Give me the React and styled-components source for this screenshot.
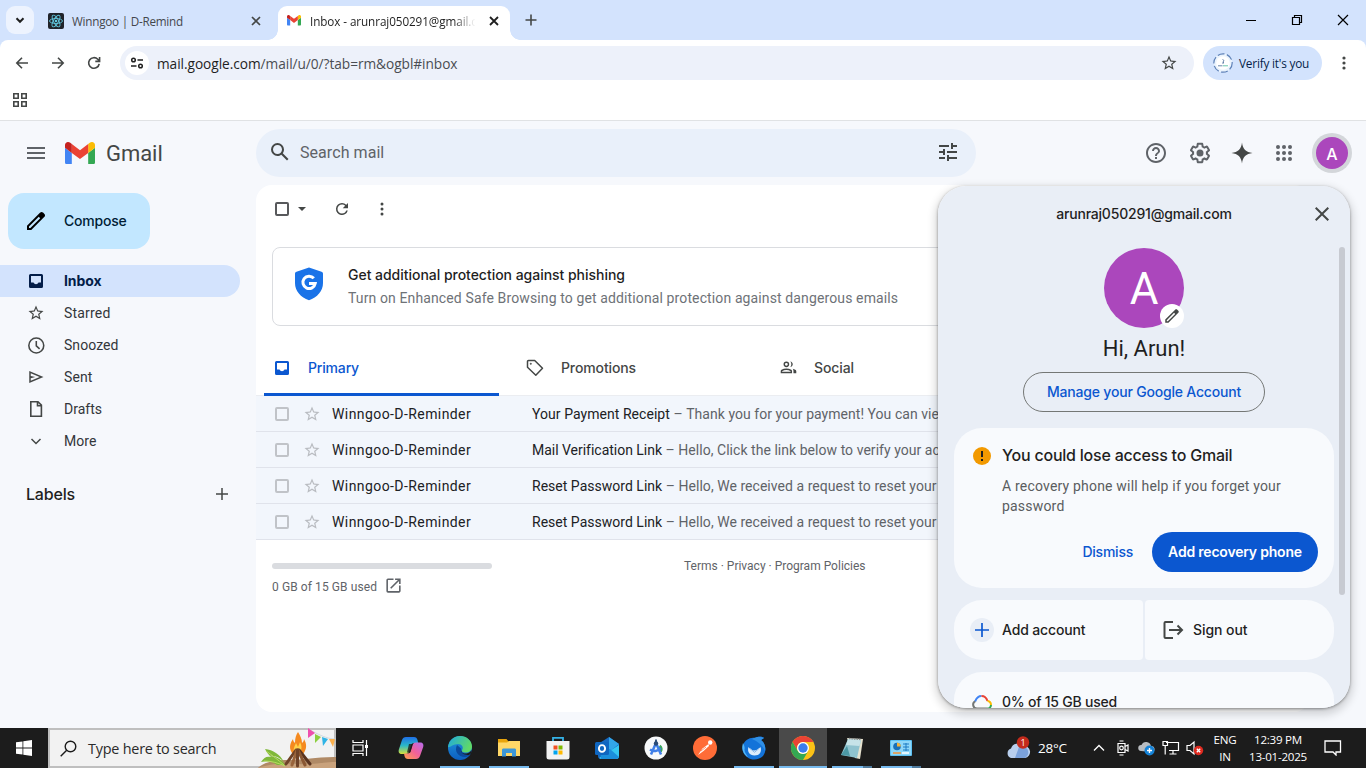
import React from 'react';
import styled, { createGlobalStyle, css } from 'styled-components';

const GlobalStyle = createGlobalStyle`
  * { box-sizing: border-box; }
  body { margin: 0; overflow: hidden; background: #f6f8fc; }
`;

const sans = '"Roboto", "Liberation Sans", sans-serif';
const medium = '"Inter", "Liberation Sans", sans-serif';
const system = '"Open Sans", "Noto Sans", sans-serif';

const Screen = styled.div`
  width: 1366px;
  height: 768px;
  display: flex;
  flex-direction: column;
  position: relative;
  overflow: hidden;
  font-family: ${sans};
`;

/* Text in the web page's own type: "strong" switches to the medium cut. */
const Text = styled.span`
  font-family: ${(p) => (p.$strong ? medium : sans)};
  font-weight: ${(p) => p.$weight || (p.$strong ? 500 : 400)};
  font-size: ${(p) => p.$size || 14}px;
  letter-spacing: ${(p) => p.$track || 0}px;
  color: ${(p) => p.$color || '#1f1f1f'};
  line-height: 20px;
  white-space: ${(p) => (p.$wrap ? 'pre-line' : 'nowrap')};
`;

const SystemText = styled.span`
  font-family: ${system};
  font-size: ${(p) => p.$size || 12}px;
  letter-spacing: ${(p) => p.$track || 0}px;
  color: ${(p) => p.$color || '#1f1f1f'};
  line-height: 18px;
  white-space: nowrap;
`;

const Svg = styled.svg`
  display: block;
  flex: none;
`;

function Icon({ d, size = 20, color = '#444746', box = 24, children }) {
  return (
    <Svg width={size} height={size} viewBox={`0 0 ${box} ${box}`} fill={color} fillRule="evenodd">
      {d && <path d={d} />}
      {children}
    </Svg>
  );
}

function LineIcon({ d, size = 16, color = '#444746', box = 16, width = 1.6 }) {
  return (
    <Svg width={size} height={size} viewBox={`0 0 ${box} ${box}`} fill="none" stroke={color} strokeWidth={width}>
      <path d={d} />
    </Svg>
  );
}

const paths = {
  search: 'M20.49 19l-5.73-5.73C15.53 12.2 16 10.91 16 9.5A6.5 6.5 0 1 0 9.5 16c1.41 0 2.7-.47 3.77-1.24L19 20.49 20.49 19zM5 9.5C5 7.01 7.01 5 9.5 5S14 7.01 14 9.5 11.99 14 9.5 14 5 11.99 5 9.5z',
  tune: 'M3 17v2h6v-2H3zM3 5v2h10V5H3zm10 16v-2h8v-2h-8v-2h-2v6h2zM7 9v2H3v2h4v2h2V9H7zm14 4v-2H11v2h10zm-6-4h2V7h4V5h-4V3h-2v6z',
  help: 'M11 18h2v-2h-2v2zm1-16C6.48 2 2 6.48 2 12s4.48 10 10 10 10-4.48 10-10S17.52 2 12 2zm0 18c-4.41 0-8-3.59-8-8s3.59-8 8-8 8 3.59 8 8-3.59 8-8 8zm0-14c-2.21 0-4 1.79-4 4h2c0-1.1.9-2 2-2s2 .9 2 2c0 2-3 1.75-3 5h2c0-2.25 3-2.5 3-5 0-2.21-1.79-4-4-4z',
  gear: 'M13.85 22.25h-3.7c-.74 0-1.36-.54-1.45-1.27l-.27-1.89c-.27-.14-.53-.29-.79-.46l-1.8.72c-.7.26-1.47-.03-1.81-.65L2.2 15.53c-.35-.66-.2-1.44.36-1.88l1.53-1.19c-.01-.15-.02-.3-.02-.46 0-.15.01-.31.02-.46l-1.52-1.19c-.59-.45-.74-1.26-.37-1.88l1.85-3.19c.34-.62 1.11-.9 1.79-.63l1.81.73c.26-.17.52-.32.78-.46l.27-1.91c.09-.7.71-1.25 1.44-1.25h3.7c.74 0 1.36.54 1.45 1.27l.27 1.89c.27.14.53.29.79.46l1.8-.72c.71-.26 1.48.03 1.82.65l1.84 3.18c.36.66.2 1.44-.36 1.88l-1.52 1.19c.01.15.02.3.02.46s-.01.31-.02.46l1.52 1.19c.56.45.72 1.23.37 1.86l-1.86 3.22c-.34.62-1.11.9-1.8.63l-1.8-.72c-.26.17-.52.32-.78.46l-.27 1.91c-.1.68-.72 1.22-1.46 1.22zm-3.23-2h2.76l.37-2.55.53-.22c.44-.18.88-.44 1.34-.78l.45-.34 2.38.96 1.38-2.4-2.03-1.58.07-.56c.03-.26.06-.51.06-.78s-.03-.53-.06-.78l-.07-.56 2.03-1.58-1.39-2.4-2.39.96-.45-.35c-.42-.32-.87-.58-1.33-.77l-.52-.22-.37-2.55h-2.76l-.37 2.55-.53.21c-.44.19-.88.44-1.34.79l-.45.33-2.38-.95-1.39 2.39 2.03 1.58-.07.56a7 7 0 0 0-.06.79c0 .26.02.53.06.78l.07.56-2.03 1.58 1.38 2.4 2.39-.96.45.35c.43.33.86.58 1.33.77l.53.22.38 2.55zM12 8.5a3.5 3.5 0 1 0 0 7 3.5 3.5 0 0 0 0-7z',
  spark: 'M12 1.5C12.7 8 16 11.3 22.5 12 16 12.7 12.7 16 12 22.5 11.3 16 8 12.7 1.5 12 8 11.3 11.3 8 12 1.5z',
  pencil: 'M5 19h1.425L16.2 9.225 14.775 7.8 5 17.575V19Zm-2 2v-4.25L16.2 3.575q.3-.275.663-.425T17.625 3q.4 0 .775.15t.65.45L20.425 5q.3.275.438.65T21 6.4q0 .4-.137.763t-.438.662L7.25 21H3Z',
  inbox: 'M2.5 1h11A1.5 1.5 0 0 1 15 2.5v11a1.5 1.5 0 0 1-1.5 1.5h-11A1.5 1.5 0 0 1 1 13.5v-11A1.5 1.5 0 0 1 2.5 1zM3 3v6.5h2.5c.6 1 1.4 1.700 2.500 1.700s1.900-.7 2.500-1.700H13V3z',
  star: 'M22 9.24l-7.19-.62L12 2 9.19 8.63 2 9.24l5.46 4.73L5.82 21 12 17.27 18.18 21l-1.63-7.03L22 9.24zM12 15.4l-3.76 2.27 1-4.28-3.32-2.88 4.38-.38L12 6.1l1.71 4.04 4.38.38-3.32 2.88 1 4.28L12 15.4z',
  send: 'M3 20V4l19 8-19 8zm2-3 11.85-5L5 7v3.5l6 1.5-6 1.5V17z',
  refresh: 'M17.65 6.35A7.958 7.958 0 0 0 12 4a8 8 0 1 0 7.73 10h-2.08A5.99 5.99 0 0 1 12 18a6 6 0 1 1 0-12c1.66 0 3.14.69 4.22 1.78L13 11h7V4l-2.35 2.35z',
  people: 'M9 11.500a4 4 0 1 0 0-8 4 4 0 0 0 0 8zm0-2a2 2 0 1 1 0-4 2 2 0 0 1 0 4zM1 20v-2.800c0-.8.4-1.500 1.100-1.900C4.100 14.100 6.500 13.500 9 13.500s4.900.6 6.900 1.800c.7.4 1.100 1.100 1.100 1.900V20H1zm2-2h12v-.8c-1.700-1.100-3.800-1.700-6-1.700s-4.300.6-6 1.700zM14.600 11.400c1.900-.3 3.400-1.900 3.400-3.900s-1.500-3.700-3.400-4c.9 1.100 1.400 2.500 1.400 4s-.5 2.800-1.400 3.900zM19 20h4v-2.800c0-1.600-2.300-2.800-5-3.400 .7.900 1 2 1 3.400z',
  open: 'M19 19H5V5h7V3H5a2 2 0 0 0-2 2v14a2 2 0 0 0 2 2h14c1.100 0 2-.9 2-2v-7h-2v7zM14 3v2h3.590l-9.830 9.830 1.410 1.410L19 6.410V10h2V3h-7z',
  close: 'M19 6.410L17.590 5 12 10.590 6.410 5 5 6.410 10.590 12 5 17.590 6.410 19 12 13.410 17.590 19 19 17.590 13.410 12z',
};

/* ---------- Browser chrome ---------- */

const TabStrip = styled.div`
  height: 40px;
  background: #d3e3fd;
  display: flex;
  align-items: flex-end;
  padding-left: 6px;
`;

const TabSearch = styled.div`
  width: 28px;
  height: 28px;
  border-radius: 9px;
  background: #edf3fe;
  display: flex;
  align-items: center;
  justify-content: center;
  margin-bottom: 6px;
`;

const Tab = styled.div`
  height: 34px;
  width: ${(p) => p.$width}px;
  display: flex;
  align-items: center;
  padding: 0 14px 5px 14px;
  gap: 8px;
  ${(p) =>
    p.$active &&
    css`
      background: #fff;
      padding: 0 8px 5px 9px;
      gap: 9px;
      border-radius: 9px 9px 0 0;
      position: relative;
      &::before, &::after {
        content: '';
        position: absolute;
        bottom: 0;
        width: 10px;
        height: 10px;
      }
      &::before { left: -10px; background: radial-gradient(circle at 0 0, transparent 9.5px, #fff 10px); }
      &::after { right: -10px; background: radial-gradient(circle at 100% 0, transparent 9.5px, #fff 10px); }
    `}
`;

const TabTitle = styled(SystemText)`
  flex: 1;
  ${(p) => p.$fade && 'mask-image: linear-gradient(90deg, #000 86%, transparent 99%);'}
`;

const NewTab = styled.div`
  width: 42px;
  height: 40px;
  display: flex;
  align-items: center;
  justify-content: center;
`;

const WindowButtons = styled.div`
  margin-left: auto;
  height: 40px;
  display: flex;
`;

const WindowButton = styled.div`
  width: 46px;
  display: flex;
  align-items: center;
  justify-content: center;
`;

const NavBar = styled.div`
  height: 45px;
  background: #fff;
  display: flex;
  align-items: center;
  padding: 1px 14px 0 14px;
  border-radius: 8px 8px 0 0;
`;

const NavBackdrop = styled.div`
  background: #d3e3fd;
`;

const NavButton = styled.div`
  width: 16px;
  margin-right: 20px;
`;

const AddressBar = styled.div`
  height: 34px;
  width: 1074px;
  margin-left: -2px;
  border-radius: 17px;
  background: #edf1fa;
  display: flex;
  align-items: center;
  padding: 0 16px 0 5px;
`;

const SiteInfo = styled.div`
  width: 24px;
  height: 24px;
  border-radius: 50%;
  background: #fff;
  display: flex;
  align-items: center;
  justify-content: center;
  margin-right: 8px;
`;

const Url = styled(SystemText)`
  flex: 1;
  padding-top: 1px;
  & > b { font-weight: 400; color: #1f1f1f; }
`;

const ProfileChip = styled.div`
  width: 119px;
  height: 34px;
  margin-left: 9px;
  border-radius: 17px;
  background: #d3e3fd;
  display: flex;
  align-items: center;
  gap: 6px;
  padding-left: 10px;
`;

const MenuSlot = styled.div`
  margin: 0 0 0 14px;
`;

const BookmarkBar = styled.div`
  height: 36px;
  background: #fff;
  border-bottom: 1px solid #e0e2e4;
  padding: 7px 12px;
`;

/* ---------- Mail page ---------- */

const Page = styled.div`
  flex: 1;
  min-height: 0;
  background: #f6f8fc;
  display: flex;
  flex-direction: column;
`;

const Header = styled.header`
  height: 64px;
  display: flex;
  align-items: center;
`;

const Brand = styled.div`
  width: 256px;
  display: flex;
  align-items: center;
  padding-left: 24px;
`;

const BrandName = styled(Text)`
  line-height: 28px;
  margin-left: 11px;
  padding-top: 1px;
`;

const Logo = styled.div`
  margin-left: 17px;
`;

const SearchBox = styled.div`
  width: 720px;
  height: 48px;
  border-radius: 24px;
  background: #e9f0fa;
  display: flex;
  align-items: center;
  padding: 0 16px 2px 12px;
`;

const SearchLabel = styled(Text)`
  flex: 1;
  margin-left: 8px;
  padding-top: 2px;
`;

const HeaderActions = styled.div`
  margin-left: auto;
  display: flex;
  align-items: center;
  padding-right: 14px;
`;

const HeaderButton = styled.div`
  width: ${(p) => p.$width}px;
  display: flex;
  justify-content: center;
`;

const Avatar = styled.div`
  width: ${(p) => p.$size}px;
  height: ${(p) => p.$size}px;
  border-radius: 50%;
  background: #ab47bc;
  display: flex;
  align-items: center;
  justify-content: center;
  padding-top: 1px;
`;

const AvatarRing = styled.div`
  padding: 4px;
  border-radius: 50%;
  background: #d3d6da;
  margin-left: 6px;
`;

const Body = styled.div`
  flex: 1;
  display: flex;
  min-height: 0;
  padding-bottom: 16px;
`;

const Sidebar = styled.nav`
  width: 256px;
  padding-top: 8px;
`;

const Compose = styled.div`
  width: 142px;
  height: 56px;
  margin: 0 0 16px 8px;
  border-radius: 16px;
  background: #c2e7ff;
  display: flex;
  align-items: center;
  padding-left: 16px;
  gap: 16px;
`;

const NavItem = styled.div`
  height: 32px;
  width: 240px;
  display: flex;
  align-items: center;
  border-radius: 0 16px 16px 0;
  background: ${(p) => (p.$active ? '#d3e3fd' : 'transparent')};
`;

const NavIcon = styled.div`
  width: 64px;
  padding-left: 26px;
  display: flex;
  & > svg { margin-left: ${(p) => p.$shift || 0}px; }
`;

const LabelsRow = styled.div`
  display: flex;
  align-items: center;
  justify-content: space-between;
  padding: 27px 26px 0 26px;
`;

const Main = styled.main`
  width: 1054px;
  border-radius: 16px;
  background: #fff;
  overflow: hidden;
`;

const Toolbar = styled.div`
  height: 48px;
  display: flex;
  align-items: center;
  padding-left: 19px;
`;

const Box = styled.div`
  width: 14px;
  height: 14px;
  flex: none;
  border: 2px solid ${(p) => (p.$faint ? '#c0c3c8' : '#58595c')};
  border-radius: 2px;
`;

const Caret = styled.div`
  margin: 0 27px 0 9px;
  border: 4px solid transparent;
  border-top-color: #444746;
  border-bottom: 0;
`;

const MoreSlot = styled.div`
  margin-left: 23px;
`;

const Notice = styled.section`
  margin: 14px 16px 0;
  height: 79px;
  border: 1px solid #dadce0;
  border-radius: 8px;
  display: flex;
  padding: 0 0 0 22px;
  align-items: center;
  gap: 25px;
`;

const ShieldSlot = styled.div`
  padding-bottom: 6px;
`;

const NoticeText = styled.div`
  display: flex;
  flex-direction: column;
  gap: 3px;
  padding-bottom: 1px;
`;

const CategoryTabs = styled.div`
  height: 70px;
  padding: 14px 0 0 8px;
  display: flex;
`;

const Category = styled.div`
  width: 235px;
  margin-right: 18px;
  display: flex;
  align-items: center;
  gap: 17px;
  padding: 2px 0 0 9px;
  border-bottom: 3px solid ${(p) => (p.$active ? '#0b57d0' : 'transparent')};
  border-radius: 3px 3px 0 0;
`;

const CategoryIcon = styled.div`
  width: 18px;
  display: flex;
  justify-content: center;
`;

const Row = styled.div`
  height: 36px;
  background: #f2f6fc;
  border-bottom: 1px solid #e0e3eb;
  display: flex;
  align-items: center;
  padding-left: 19px;
  box-shadow: ${(p) => (p.$first ? '0 -1px 0 #ebedf1' : 'none')};
`;

const StarSlot = styled.div`
  margin: 1px 11px 0 14px;
`;

const Sender = styled.div`
  width: 200px;
  display: flex;
`;

const Footer = styled.footer`
  display: flex;
  padding: 16px 16px 0;
`;

const Storage = styled.div`
  width: 412px;
  padding-top: 7px;
`;

const StorageBar = styled.div`
  width: 220px;
  height: 6px;
  border-radius: 3px;
  background: #dadce0;
`;

const StorageLine = styled.div`
  display: flex;
  align-items: center;
  gap: 7px;
  padding-top: 8px;
  & > svg { margin-top: -4px; }
`;

/* ---------- Account card ---------- */

const AccountCard = styled.aside`
  position: absolute;
  left: 938px;
  top: 186px;
  width: 412px;
  height: 522px;
  border-radius: 28px;
  background: #e9eef6;
  overflow: hidden;
  display: flex;
  flex-direction: column;
  align-items: center;
  z-index: 1;
  & > * { flex: none; }
`;

const AccountShadow = styled.div`
  position: absolute;
  left: 938px;
  top: 186px;
  width: 412px;
  height: 522px;
  border-radius: 28px;
  box-shadow: 0 4px 8px 3px rgba(0, 0, 0, 0.15), 0 1px 3px rgba(0, 0, 0, 0.4);
`;

const AccountTop = styled.div`
  height: 62px;
  width: 100%;
  display: grid;
  grid-template-columns: 56px 1fr 56px;
  align-items: center;
  justify-items: center;
  padding-bottom: 6px;
`;

const BigAvatar = styled.div`
  position: relative;
`;

const EditBadge = styled.div`
  position: absolute;
  right: 0;
  bottom: 0;
  width: 24px;
  height: 24px;
  border-radius: 50%;
  background: #fff;
  display: flex;
  align-items: center;
  justify-content: center;
`;

const Greeting = styled(Text)`
  line-height: 28px;
  margin: 7px 0 9px;
`;

const ManageButton = styled.div`
  width: 242px;
  height: 40px;
  margin-bottom: 16px;
  border: 1px solid #747775;
  border-radius: 20px;
  display: flex;
  align-items: center;
  justify-content: center;
`;

const Panel = styled.div`
  width: 380px;
  border-radius: 28px;
  background: #f8fafd;
`;

const AlertPanel = styled(Panel)`
  height: 160px;
  padding: 18px 16px 16px 18px;
  display: flex;
  gap: 10px;
  margin-bottom: 12px;
`;

const AlertBody = styled.div`
  flex: 1;
  display: flex;
  flex-direction: column;
  margin-top: -1px;
`;

const AlertCopy = styled(Text)`
  margin-top: 11px;
`;

const AlertActions = styled.div`
  margin-top: 16px;
  display: flex;
  justify-content: flex-end;
  align-items: center;
  gap: 19px;
`;

const PrimaryButton = styled.div`
  width: 166px;
  height: 40px;
  border-radius: 20px;
  background: #0b57d0;
  display: flex;
  align-items: center;
  justify-content: center;
`;

const SplitPanel = styled.div`
  width: 380px;
  height: 60px;
  display: grid;
  grid-template-columns: 1fr 1fr;
  gap: 2px;
  margin-bottom: 12px;
`;

const SplitItem = styled.div`
  background: #f8fafd;
  border-radius: ${(p) => (p.$side === 'left' ? '28px 4px 4px 28px' : '4px 28px 28px 4px')};
  display: flex;
  align-items: center;
  padding-left: 16px;
  gap: 8px;
`;

const PlusBubble = styled.div`
  width: 24px;
  height: 24px;
  border-radius: 50%;
  background: #e9eef6;
  display: flex;
  align-items: center;
  justify-content: center;
`;

const CloudPanel = styled(Panel)`
  height: 60px;
  display: flex;
  align-items: center;
  padding-left: 18px;
  gap: 10px;
`;

const ScrollThumb = styled.div`
  position: absolute;
  right: 5px;
  top: 61px;
  width: 6px;
  height: 348px;
  border-radius: 3px;
  background: #c7cad1;
`;

/* ---------- Taskbar ---------- */

const Taskbar = styled.div`
  height: 40px;
  background: #1c1c1c;
  display: flex;
`;

const StartButton = styled.div`
  width: 48px;
  display: flex;
  align-items: center;
  justify-content: center;
`;

const TaskSearch = styled.div`
  width: 288px;
  height: 40px;
  background: #f2f2f2;
  border: 2px solid #bfbfbf;
  display: flex;
  align-items: center;
  padding-left: 10px;
  position: relative;
`;

const TaskSearchText = styled(SystemText)`
  margin-left: 11px;
  padding-top: 1px;
`;

const Campfire = styled.div`
  position: absolute;
  right: -2px;
  bottom: -2px;
`;

const Apps = styled.div`
  width: 590px;
  display: grid;
  grid-template-columns: 51px repeat(11, 49px);
`;

const AppSlot = styled.div`
  display: flex;
  align-items: center;
  justify-content: center;
  position: relative;
  padding-right: ${(p) => (p.$current ? 0 : 2)}px;
  &::after {
    content: '';
    position: absolute;
    bottom: 0;
    left: 4px;
    right: 5px;
    height: 2px;
    background: ${(p) =>
      p.$stacked ? 'linear-gradient(90deg, #76b9ed 78%, #4f7a9c 78%)' : p.$running ? '#76b9ed' : 'transparent'};
  }
  ${(p) =>
    p.$current &&
    css`
      background: #4a4a4a;
      margin-right: 1px;
      &::after { left: 0; right: 0; }
    `}
`;

const Tray = styled.div`
  margin-left: auto;
  padding-right: 13px;
  display: grid;
  grid-template-columns: 28px 55px repeat(5, 24px) 36px 70px 40px;
  align-items: center;
  justify-items: center;
`;

const Temperature = styled(SystemText)`
  justify-self: start;
  margin-left: 6px;
`;

const TrayStack = styled.div`
  display: flex;
  flex-direction: column;
  align-items: center;
`;

const TrayText = styled(SystemText)`
  line-height: 17px;
  &:first-child { margin-top: -1px; }
`;

function GmailMark({ width }) {
  return (
    <Svg width={width} height={width * 0.75} viewBox="52 42 88 66">
      <path fill="#4285f4" d="M58 108h14V74L52 59v43c0 3.320 2.690 6 6 6" />
      <path fill="#34a853" d="M120 108h14c3.320 0 6-2.690 6-6V59l-20 15" />
      <path fill="#fbbc04" d="M120 48v26l20-15v-8c0-7.420-8.470-11.650-14.400-7.200" />
      <path fill="#ea4335" d="M72 74V48l24 18 24-18v26L96 92" />
      <path fill="#c5221f" d="M52 51v8l20 15V48l-5.600-4.200c-5.940-4.450-14.400-.22-14.400 7.200" />
    </Svg>
  );
}

function ReactMark() {
  return (
    <Svg width="16" height="16" viewBox="0 0 16 16">
      <rect width="16" height="16" rx="2" fill="#20232a" />
      <g fill="none" stroke="#61c7de" strokeWidth="0.9">
        <ellipse cx="8" cy="8" rx="6.500" ry="2.500" />
        <ellipse cx="8" cy="8" rx="6.500" ry="2.500" transform="rotate(60 8 8)" />
        <ellipse cx="8" cy="8" rx="6.500" ry="2.500" transform="rotate(120 8 8)" />
      </g>
      <circle cx="8" cy="8" r="1.300" fill="#61c7de" />
    </Svg>
  );
}

function Dots({ size = 16, color = '#444746', r = 1.7 }) {
  return (
    <Svg width={size} height={size} viewBox="0 0 16 16" fill={color}>
      {[3, 8, 13].map((y) => (
        <circle key={y} cx="8" cy={y} r={r} />
      ))}
    </Svg>
  );
}

function BrowserChrome() {
  return (
    <>
      <TabStrip>
        <TabSearch>
          <LineIcon d="M4.500 6.300l3.500 3.500 3.500-3.500" width={2} color="#1f1f1f" />
        </TabSearch>
        <Tab $width={244}>
          <ReactMark />
          <TabTitle $size={11.7} $track={-0.23} $color="#44474c">Winngoo | D-Remind</TabTitle>
          <LineIcon d="M4 4l8 8M12 4l-8 8" width={1.7} />
        </Tab>
        <Tab $width={232} $active>
          <GmailMark width={14} />
          <TabTitle $size={11.7} $track={-0.08} $fade>Inbox - arunraj050291@gmail.c</TabTitle>
          <LineIcon d="M4 4l8 8M12 4l-8 8" width={1.8} color="#1f1f1f" />
        </Tab>
        <NewTab>
          <Svg width="12" height="12" viewBox="0 0 12 12" stroke="#444746" strokeWidth="1.600">
            <path d="M.5 6h11M6 .5v11" />
          </Svg>
        </NewTab>
        <WindowButtons>
          <WindowButton><LineIcon d="M3 8.500h10" width={1} color="#000" /></WindowButton>
          <WindowButton><LineIcon d="M3.500 5.500h7v7h-7zM5.500 5.500v-2h7v7h-2" width={1.2} color="#000" /></WindowButton>
          <WindowButton><LineIcon d="M3 3l10 10M13 3L3 13" width={1.2} color="#000" /></WindowButton>
        </WindowButtons>
      </TabStrip>
      <NavBackdrop>
        <NavBar>
          <NavButton><LineIcon d="M14 8H3M8 2.700L2.800 8 8 13.300" width={1.6} /></NavButton>
          <NavButton><LineIcon d="M2 8h11M8 2.700L13.200 8 8 13.300" width={1.6} /></NavButton>
          <NavButton><LineIcon d="M13.200 8.800A5.300 5.300 0 1 1 11.800 4.300L13.400 6M13.600 2v4.400H9.300" width={1.6} /></NavButton>
          <AddressBar>
            <SiteInfo>
              <Svg width="14" height="14" viewBox="0 0 14 14" fill="none" stroke="#1f1f1f" strokeWidth="1.500">
                <circle cx="3.500" cy="4" r="1.800" />
                <path d="M7.500 4H13M1 10h5.500" />
                <circle cx="10.500" cy="10" r="1.800" />
              </Svg>
            </SiteInfo>
            <Url $size={13.7} $track={-0.05} $color="#4a4d52"><b>mail.google.com</b>/mail/u/0/?tab=rm&amp;ogbl#inbox</Url>
            <Icon d={paths.star} size={18} color="#444746" />
          </AddressBar>
          <ProfileChip>
            <Svg width="20" height="20" viewBox="0 0 20 20">
              <circle cx="10" cy="10" r="9.500" fill="#eaf3fd" />
              <circle cx="10" cy="10" r="9.200" fill="none" stroke="#5c80b8" strokeWidth="1.200" strokeDasharray="7 2.400" />
              <circle cx="10" cy="10" r="6.800" fill="#fff" />
              <path d="M9.500 6.500l1.500 1-1 1.500 1 1H9" fill="none" stroke="#5b7aa5" strokeWidth=".9" />
              <path d="M5 12.800h4.500" stroke="#6a86ad" strokeWidth="1" />
              <path d="M10 12.800h5" stroke="#6ac6ab" strokeWidth="1" />
            </Svg>
            <SystemText $size={11.8} $track={-0.2} $color="#041e49">Verify it's you</SystemText>
          </ProfileChip>
          <MenuSlot><Dots r={1.6} /></MenuSlot>
        </NavBar>
      </NavBackdrop>
      <BookmarkBar>
        <LineIcon d="M1.800 1.800h4.400v4.400H1.800zM9.800 1.800h4.400v4.400H9.800zM1.800 9.800h4.400v4.400H1.800zM9.800 9.800h4.400v4.400H9.800z" width={1.6} />
      </BookmarkBar>
    </>
  );
}

const folders = [
  { name: 'Starred', track: 0.19, icon: <Icon d={paths.star} size={18} />, shift: 1 },
  { name: 'Snoozed', track: 0.06, icon: <LineIcon d="M8 1a7.200 7.200 0 1 1 0 14.400A7.200 7.200 0 0 1 8 1zM8 3.800V8.500l3.200 3" width={1.5} box={16.4} size={17} />, shift: 2 },
  { name: 'Sent', track: 0.11, icon: <Icon d={paths.send} size={18} />, shift: 1 },
  { name: 'Drafts', track: 0, icon: <LineIcon d="M2.800.8h7.200l3.400 3.400v11H2.800zM9.500 1v3.800h3.800" width={1.6} />, shift: 2 },
  { name: 'More', track: 0.06, icon: <LineIcon d="M3.500 6l4.500 4.500L12.500 6" width={1.5} />, shift: 2 },
];

const mails = [
  { subject: 'Your Payment Receipt', track: 0.05, text: 'Thank you for your payment! You can view your receipt' },
  { subject: 'Mail Verification Link', track: -0.02, text: 'Hello, Click the link below to verify your account' },
  { subject: 'Reset Password Link', track: 0.02, text: 'Hello, We received a request to reset your password' },
  { subject: 'Reset Password Link', track: 0.02, text: 'Hello, We received a request to reset your password' },
];

function MailPage() {
  return (
    <Page>
      <Header>
        <Brand>
          <Icon d="M3 18h18v-2H3v2zm0-5h18v-2H3v2zm0-7v2h18V6H3z" size={24} color="#5f6368" />
          <Logo><GmailMark width={30} /></Logo>
          <BrandName $size={22} $track={-0.05} $color="#444746">Gmail</BrandName>
        </Brand>
        <SearchBox>
          <Icon d={paths.search} size={24} />
          <SearchLabel $size={16} $track={0.06} $color="#5f6368">Search mail</SearchLabel>
          <Icon d={paths.tune} size={24} />
        </SearchBox>
        <HeaderActions>
          <HeaderButton $width={44}><Icon d={paths.help} size={24} color="#5f6368" /></HeaderButton>
          <HeaderButton $width={44}><Icon d={paths.gear} size={24} color="#5f6368" /></HeaderButton>
          <HeaderButton $width={40}><Icon d={paths.spark} size={24} /></HeaderButton>
          <HeaderButton $width={44}>
            <Icon size={24} color="#5f6368">
              {[6, 12, 18].map((y) => [6, 12, 18].map((x) => <circle key={`${x}-${y}`} cx={x} cy={y} r="2" />))}
            </Icon>
          </HeaderButton>
          <AvatarRing><Avatar $size={32}><Text $strong $size={16} $color="#fff">A</Text></Avatar></AvatarRing>
        </HeaderActions>
      </Header>
      <Body>
        <Sidebar>
          <Compose>
            <Icon d={paths.pencil} size={24} color="#000" />
            <Text $strong $track={-0.22} $color="#001d35">Compose</Text>
          </Compose>
          <NavItem $active>
            <NavIcon $shift={2}><Icon d={paths.inbox} size={16} box={16} color="#041e49" /></NavIcon>
            <Text $strong $weight={700} $track={-0.08} $color="#041e49">Inbox</Text>
          </NavItem>
          {folders.map((f) => (
            <NavItem key={f.name}>
              <NavIcon $shift={f.shift}>{f.icon}</NavIcon>
              <Text $track={f.track} $color="#33363a">{f.name}</Text>
            </NavItem>
          ))}
          <LabelsRow>
            <Text $strong $size={16} $track={-0.18}>Labels</Text>
            <LineIcon d="M8 2v12M2 8h12" width={1.5} />
          </LabelsRow>
        </Sidebar>
        <Main>
          <Toolbar>
            <Box />
            <Caret />
            <Icon d={paths.refresh} size={18} />
            <MoreSlot><Dots r={1.5} size={16} /></MoreSlot>
          </Toolbar>
          <Notice>
            <ShieldSlot>
              <Svg width="28" height="34" viewBox="0 0 28 34">
                <path fill="#1a73e8" d="M14 .5L26.500 4.800c.9.300 1.500 1.100 1.500 2V16c0 8-5.800 14.500-14 17.300C5.800 30.500 0 24 0 16V6.800c0-.9.6-1.700 1.500-2z" />
                <path fill="none" stroke="#fff" strokeWidth="3" d="M18.800 11.300a6.200 6.200 0 1 0 1.400 5.200H14" />
              </Svg>
            </ShieldSlot>
            <NoticeText>
              <Text $strong $track={-0.03}>Get additional protection against phishing</Text>
              <Text $track={0.12} $color="#6e7277">Turn on Enhanced Safe Browsing to get additional protection against dangerous emails</Text>
            </NoticeText>
          </Notice>
          <CategoryTabs>
            <Category $active>
              <CategoryIcon><Icon d={paths.inbox} size={16} box={16} color="#0b57d0" /></CategoryIcon>
              <Text $strong $track={-0.17} $color="#0b57d0">Primary</Text>
            </Category>
            <Category>
              <CategoryIcon>
                <Svg width="18" height="18" viewBox="0 0 18 18" fill="none" stroke="#444746" strokeWidth="1.500">
                  <path d="M1.500 2.500a1 1 0 0 1 1-1h6.200L16.500 9.300l-6.700 6.900L1.500 8.200z" strokeLinejoin="round" />
                  <circle cx="4.800" cy="4.800" r=".7" fill="#444746" stroke="#444746" strokeWidth=".5" />
                </Svg>
              </CategoryIcon>
              <Text $strong $track={-0.12} $color="#444746">Promotions</Text>
            </Category>
            <Category>
              <CategoryIcon><Icon d={paths.people} size={17} /></CategoryIcon>
              <Text $strong $track={-0.1} $color="#444746">Social</Text>
            </Category>
          </CategoryTabs>
          {mails.map((m, i) => (
            <Row key={i} $first={i === 0}>
              <Box $faint />
              <StarSlot><Icon d={paths.star} size={18} color="#b9bcc1" /></StarSlot>
              <Sender><Text $track={0.42} $color="#202124">Winngoo-D-Reminder</Text></Sender>
              <Text $track={m.track} $color="#202124">{m.subject}</Text>
              <Text $track={0.04} $color="#5f6368">&nbsp;–&nbsp;{m.text}</Text>
            </Row>
          ))}
          <Footer>
            <Storage>
              <StorageBar />
              <StorageLine>
                <Text $size={12} $track={0.09} $color="#5f6368">0 GB of 15 GB used</Text>
                <Icon d={paths.open} size={19} color="#5f6368" />
              </StorageLine>
            </Storage>
            <Text $size={12} $color="#5f6368">Terms · Privacy · Program Policies</Text>
          </Footer>
        </Main>
      </Body>
    </Page>
  );
}

function AccountPopup() {
  return (
    <>
      <AccountShadow />
      <AccountCard>
        <AccountTop>
          <span />
          <Text $strong $track={-0.2}>arunraj050291@gmail.com</Text>
          <Icon d={paths.close} size={24} />
        </AccountTop>
        <BigAvatar>
          <Avatar $size={80}><Text $size={44} $color="#fff">A</Text></Avatar>
          <EditBadge><Icon d={paths.pencil} size={18} /></EditBadge>
        </BigAvatar>
        <Greeting $size={22}>Hi, Arun!</Greeting>
        <ManageButton><Text $strong $track={-0.2} $color="#0b57d0">Manage your Google Account</Text></ManageButton>
        <AlertPanel>
          <Svg width="20" height="20" viewBox="0 0 20 20">
            <circle cx="10" cy="10" r="9" fill="#f29900" />
            <path d="M10 5v6M10 13v2" stroke="#1f1f1f" strokeWidth="2" />
          </Svg>
          <AlertBody>
            <Text $strong $size={16} $track={-0.22}>You could lose access to Gmail</Text>
            <AlertCopy $wrap $track={0.19} $color="#5a5d60">{'A recovery phone will help if you forget your\npassword'}</AlertCopy>
            <AlertActions>
              <Text $strong $track={-0.24} $color="#0b57d0">Dismiss</Text>
              <PrimaryButton><Text $strong $weight={600} $track={-0.2} $color="#fff">Add recovery phone</Text></PrimaryButton>
            </AlertActions>
          </AlertBody>
        </AlertPanel>
        <SplitPanel>
          <SplitItem $side="left">
            <PlusBubble><LineIcon d="M8 1v14M1 8h14" width={1.7} color="#0b57d0" /></PlusBubble>
            <Text $strong $track={-0.14}>Add account</Text>
          </SplitItem>
          <SplitItem $side="right">
            <Svg width="24" height="24" viewBox="0 0 24 24" fill="none" stroke="#444746" strokeWidth="2">
              <path d="M12 4H4.500a1 1 0 0 0-1 1v14a1 1 0 0 0 1 1H12M8 12h13M16.500 7.500L21 12l-4.500 4.500" />
            </Svg>
            <Text $strong $track={-0.07}>Sign out</Text>
          </SplitItem>
        </SplitPanel>
        <CloudPanel>
          <Svg width="20" height="16" viewBox="0 0 20 16" fill="none" strokeWidth="2">
            <path stroke="#747775" d="M3.500 7.200A3.800 3.800 0 0 0 5 14.500h10" />
            <path stroke="#4285f4" d="M3.200 7.300C4.500 4 6.500 2 9.500 2" />
            <path stroke="#ea4335" d="M9.500 2c3 0 5 1.800 6 5" />
            <path stroke="#fbbc04" d="M15.500 7c2 .3 3.500 2 3.500 4" />
            <path stroke="#34a853" d="M19 11a3.500 3.500 0 0 1-4 3.500" />
          </Svg>
          <Text $strong $track={-0.23}>0% of 15 GB used</Text>
        </CloudPanel>
        <ScrollThumb />
      </AccountCard>
    </>
  );
}

function CampfireArt() {
  return (
    <Svg width="80" height="40" viewBox="0 0 80 40">
      <path d="M2 40c6-6 16-8 30-8 18 0 26-3 46-3h2v11z" fill="#b08a66" />
      <path d="M2 40c10-4 22-5 40-4s24-2 38-2v6z" fill="#c9a27c" />
      <path d="M5 34c8-2 12 0 16 3 6 0 8 0 9 1-4-6-9-10-16-10 4-1 9 1 14 6-4-8-11-12-19-13 2 4 4 6 6 8-4-1-7 0-10 5z" fill="#7fb83a" />
      <path d="M8 33c8 0 14 2 21 5M10 23c6 4 12 9 18 14" stroke="#b9da62" fill="none" />
      <path d="M36 25c-4-6-1-11 1-14 0 2 1 3 2 4 0-5 1-8 3-11 2 3 4 7 4 11 1-1 2-2 2-4 3 5 3 10-1 15z" fill="#f58a1f" />
      <path d="M38 24c-1-4 1-6 2-9l2 4 2-5c2 4 2 7 0 10z" fill="#ffd34a" />
      <g strokeWidth="3" strokeLinecap="round">
        <path d="M40 22L30 36" stroke="#6e4328" />
        <path d="M43 22l11 14" stroke="#5a3420" />
        <path d="M41 22l-5 15" stroke="#99643b" />
        <path d="M42 22l7 15" stroke="#8a5733" />
        <path d="M41.500 22v16" stroke="#6e4328" />
      </g>
      <path d="M52 1c10 5 18 10 28 10" stroke="#c7d3dd" fill="none" strokeWidth=".8" />
      <path d="M52 0l7 5-7 5z" fill="#ee4fae" />
      <path d="M59 6l6 3-6 6z" fill="#8ccf3f" />
      <path d="M66 9l6 2-5 7z" fill="#2fb4e6" />
      <path d="M73 11h6l-2 8z" fill="#fbb04c" />
    </Svg>
  );
}

function Copilot() {
  return (
    <Svg width="26" height="24" viewBox="0 0 26 24">
      <defs>
        <linearGradient id="cpA" x1="0" y1="0" x2="0" y2="1">
          <stop offset="0" stopColor="#1f6fe8" /><stop offset=".5" stopColor="#2bb8c8" /><stop offset="1" stopColor="#d5e03a" />
        </linearGradient>
        <linearGradient id="cpB" x1="1" y1="0" x2="0" y2="1">
          <stop offset="0" stopColor="#b66cf0" /><stop offset=".5" stopColor="#f0609a" /><stop offset="1" stopColor="#ffa04a" />
        </linearGradient>
      </defs>
      <path d="M8 1h8c2 0 3 1 3.500 3l.7 3h-4c-2 0-3 1-3.500 3l-1.500 5c-.5 2-1.500 3-3.500 3H4c-3 0-4-2-3-5l3-9C4.700 2 6 1 8 1z" fill="url(#cpA)" />
      <path d="M18 23h-8c-2 0-3-1-3.500-3L6 17.500h3.500c2 0 3-1 3.500-3l1.500-5c.5-2 1.500-3 3.500-3h4c3 0 4 2 3 5l-3 8.500c-.7 2-2 3-4 3z" fill="url(#cpB)" />
      <path d="M11 8h3.500l-2.300 8.500H9z" fill="#1c1c1c" opacity=".8" />
    </Svg>
  );
}

function Edge() {
  return (
    <Svg width="24" height="24" viewBox="0 0 24 24">
      <defs>
        <linearGradient id="edA" x1="0" y1="0" x2="1" y2=".4">
          <stop offset="0" stopColor="#1fa9e0" /><stop offset="1" stopColor="#5fd968" />
        </linearGradient>
        <linearGradient id="edB" x1="0" y1="0" x2="0" y2="1">
          <stop offset="0" stopColor="#2196dd" /><stop offset="1" stopColor="#0c5fc0" />
        </linearGradient>
      </defs>
      <circle cx="12" cy="12" r="12" fill="url(#edB)" />
      <path d="M0 11C1 4 6 0 12 0c7 0 12 5 12 10.500 0 4-3 6-6 6-3.500 0-5-1.300-4-2.500 2-2.500 0-6-4-6-5 0-8.500 4-10 3z" fill="url(#edA)" />
      <path d="M9 9c-3 6 1 12 8 12 2 0 4-1 5.500-2.500-3 .8-9 0-9.500-6z" fill="#0b4a9c" />
      <path d="M13.500 14.500c-1 2 2 3.500 5 3 2.500-.4 4-1.500 5-3.500v3l-2.500 2c-4 0-7.500-1-7.500-4.500z" fill="#1c1c1c" />
    </Svg>
  );
}

function Explorer() {
  return (
    <Svg width="22" height="20" viewBox="0 0 22 20">
      <path d="M0 1h8.500l2 2.500H22V18H0z" fill="#e8a40c" />
      <path d="M0 4.500h9L11 3h11v15H0z" fill="#ffd767" />
      <path d="M4 18.500v-6.500c0-1 .6-1.500 1.500-1.500h11c1 0 1.500.5 1.500 1.500v6.500h-4V15H8v3.500z" fill="#3d97d8" />
    </Svg>
  );
}

function Store() {
  return (
    <Svg width="24" height="24" viewBox="0 0 24 24">
      <path d="M7 6V1.800h10V6" fill="none" stroke="#35b3e8" strokeWidth="1.800" />
      <path d="M.5 5h23v16a2.500 2.500 0 0 1-2.500 2.500H3A2.500 2.500 0 0 1 .5 21z" fill="#f2f2f2" />
      <path d="M7.500 9.500h4v4h-4z" fill="#f25022" />
      <path d="M12.500 9.500h4v4h-4z" fill="#7fba00" />
      <path d="M7.500 14.500h4v4h-4z" fill="#00a4ef" />
      <path d="M12.500 14.500h4v4h-4z" fill="#ffb900" />
    </Svg>
  );
}

function Outlook() {
  return (
    <Svg width="24" height="22" viewBox="0 0 24 22">
      <path d="M3 7l11-7 10 7v12a3 3 0 0 1-3 3H6a3 3 0 0 1-3-3z" fill="#1669c1" />
      <path d="M14 0l10 7-10 8z" fill="#32a5e8" />
      <path d="M24 8v11a3 3 0 0 1-3 3H6l-2-1z" fill="#35c6f1" />
      <path d="M5 12h10l9 8c-.5 1-1.500 2-3 2H6z" fill="#1b8fdc" />
      <rect x="0" y="5" width="14" height="13" rx="1.500" fill="#0f66c0" />
      <ellipse cx="7" cy="11.500" rx="3.100" ry="3.400" fill="none" stroke="#fff" strokeWidth="1.900" />
    </Svg>
  );
}

function AndroidStudio() {
  return (
    <Svg width="24" height="24" viewBox="0 0 24 24">
      <circle cx="12" cy="12" r="11.500" fill="#f7f9fa" />
      <path d="M15.500 10a4 4 0 0 1 1 5.500" stroke="#3ba55d" strokeWidth="3" fill="none" />
      <path d="M7 18.500L12 7l5 11.500M6 13.500c3.500 2.500 8 2 10.500-1.500" fill="none" stroke="#3f7fe8" strokeWidth="2.500" />
      <circle cx="12" cy="7.500" r="2.200" fill="#2b4b75" />
      <path d="M12 3.500v3" stroke="#2b4b75" strokeWidth="1.800" />
    </Svg>
  );
}

function Postman() {
  return (
    <Svg width="24" height="24" viewBox="0 0 24 24">
      <circle cx="12" cy="12" r="12" fill="#ff6c37" />
      <circle cx="17.200" cy="6.500" r="2.200" fill="#fff" />
      <path d="M15.500 8L9.500 12.500 5 19l5.500-4L16 10z" fill="#fff" />
      <path d="M8 15l5-4" stroke="#ff6c37" strokeWidth=".7" />
    </Svg>
  );
}

function Thunderbird() {
  return (
    <Svg width="24" height="24" viewBox="0 0 24 24">
      <path d="M1 9c2-5 7-8 12-7 3-2 7-2 9 0l-3 2c5 4 6 11 2 16-4 4-11 5-16 1C1 18-1 13 1 9z" fill="#1373d9" />
      <path d="M10 3c5-3 10-2 12-1l-3 2c3 2 5 7 4 11-2-5-6-9-13-12z" fill="#2f8fe6" />
      <path d="M1 7c1 2 2 4 1.500 6-.5 3 2.500 6 3.500 8C2 19-1 13 1 7z" fill="#54b7f5" />
      <path d="M6.500 11c3 4.500 8 4.500 12 0 1.500 5-1 8.500-6 8.500s-7.500-4-6-8.500z" fill="#dcecfb" />
      <path d="M8 12.500l4.500 3.800 4.500-3.800" fill="none" stroke="#8db8e6" />
    </Svg>
  );
}

function Chrome() {
  return (
    <Svg width="24" height="24" viewBox="0 0 24 24">
      <circle cx="12" cy="12" r="12" fill="#fbc116" />
      <path d="M1.600 6A12 12 0 0 1 22.400 6H12a6 6 0 0 0-5.200 9z" fill="#ea4335" />
      <path d="M1.600 6A12 12 0 0 0 12 24l5.200-9A6 6 0 0 1 6.800 15z" fill="#34a853" />
      <circle cx="12" cy="12" r="6" fill="#fff" />
      <circle cx="12" cy="12" r="4.700" fill="#3b7ded" />
    </Svg>
  );
}

function Notepad() {
  return (
    <Svg width="24" height="22" viewBox="0 0 24 22">
      <path d="M7 1l16 1-3 20-5-1z" fill="#e6e2cf" />
      <path d="M8 2l13 1-4 18L1 18z" fill="#8fc3cf" />
      <path d="M8 2l13 1-1.500 6L6 8z" fill="#c6e3e8" />
      <path d="M1 18l6-9 3 10z" fill="#4c98a5" />
      <path d="M9 1.500l12 1" stroke="#8a8f91" strokeWidth="1.500" strokeDasharray="1.500 1" />
    </Svg>
  );
}

function ControlPanel() {
  return (
    <Svg width="22" height="16" viewBox="0 0 22 16">
      <rect width="22" height="16" rx="1" fill="#5cc0f2" />
      <rect x="1" y="1" width="20" height="14" fill="#8ed7f9" />
      <circle cx="7" cy="6.500" r="3.800" fill="#1a70b8" />
      <path d="M7 6.500V2.700a3.800 3.800 0 0 1 3.800 3.800z" fill="#f4b13a" />
      <path d="M13 4h6M13 7h6M13 10h6M16 3v8" stroke="#1e7cc4" />
      <path d="M3 13h8" stroke="#f2953a" strokeWidth="1.500" />
      <path d="M12 13h7" stroke="#fff" strokeWidth="1.500" />
    </Svg>
  );
}

const pinned = [
  { art: <Copilot /> },
  { art: <Edge />, running: true },
  { art: <Explorer />, running: true },
  { art: <Store /> },
  { art: <Outlook /> },
  { art: <AndroidStudio /> },
  { art: <Postman /> },
  { art: <Thunderbird />, running: true },
  { art: <Chrome />, running: true, current: true },
  { art: <Notepad />, running: true, stacked: true },
  { art: <ControlPanel />, running: true, stacked: true },
];

function TaskbarRow() {
  return (
    <Taskbar>
      <StartButton>
        <Svg width="16" height="16" viewBox="0 0 16 16" fill="#fff">
          <path d="M0 2.300L6.500 1.400v6.200H0zM7.300 1.300L16 0v7.600H7.300zM0 8.400h6.500v6.200L0 13.700zM7.300 8.400H16V16l-8.700-1.300z" />
        </Svg>
      </StartButton>
      <TaskSearch>
        <Svg width="17" height="17" viewBox="0 0 17 17" fill="none" stroke="#1c1c1c" strokeWidth="1.400">
          <circle cx="10.500" cy="6.500" r="5.300" />
          <path d="M6.700 10.300L.7 16.300" />
        </Svg>
        <TaskSearchText $size={14.4} $track={-0.22} $color="#2b2b2b">Type here to search</TaskSearchText>
        <Campfire><CampfireArt /></Campfire>
      </TaskSearch>
      <Apps>
        <AppSlot>
          <Svg width="17" height="16" viewBox="0 0 17 16" fill="none" stroke="#fff" strokeWidth="1.200">
            <path d="M1 0v2.500h10V0M1 16v-2.500h10V16M1 5h10v6H1zM14.500 0v16" />
            <path d="M13 5h3v3h-3z" fill="#fff" stroke="none" />
          </Svg>
        </AppSlot>
        {pinned.map((a, i) => (
          <AppSlot key={i} $running={a.running} $current={a.current} $stacked={a.stacked}>{a.art}</AppSlot>
        ))}
      </Apps>
      <Tray>
        <Svg width="26" height="26" viewBox="0 0 26 26">
          <path d="M6 23a5 5 0 0 1 0-9.500A7 7 0 0 1 18 11a6 6 0 0 1 2 12z" fill="#b9cfee" />
          <path d="M14 12a6 6 0 1 1 6 11H10z" fill="#7ba2dc" />
          <circle cx="18" cy="7.500" r="6.200" fill="#c42b1c" />
          <text x="18" y="10.800" textAnchor="middle" fontFamily="Open Sans" fontSize="9" fill="#fff">1</text>
        </Svg>
        <Temperature $size={13.5} $track={-0.25} $color="#fff">28°C</Temperature>
        <LineIcon d="M3 10.500l5-5 5 5" width={1.3} color="#fff" />
        <Svg width="14" height="16" viewBox="0 0 14 16" fill="none" stroke="#fff" strokeWidth="1.200">
          <path d="M2 3.500h7v9H2zM9 6.500l3-1.500v6l-3-1.500M3.500 1h4M3.500 15h4" />
          <circle cx="5.500" cy="8" r="1.800" />
        </Svg>
        <Svg width="18" height="16" viewBox="0 0 18 16">
          <path d="M3 11a3 3 0 0 1 .5-6A5 5 0 0 1 13 6a3 3 0 0 1 1 6z" fill="#b8bcc0" />
          <circle cx="11.500" cy="10.500" r="5" fill="#1583d8" />
          <path d="M11.500 8v5M9 10.500h5" stroke="#fff" strokeWidth="1.400" />
        </Svg>
        <Svg width="18" height="16" viewBox="0 0 18 16" fill="none" stroke="#fff" strokeWidth="1.200">
          <path d="M4 2.500h12.500v8H7M11 10.500V14M7.500 14h7M1 1.500h4.500v4H1zM3.200 5.500V14.500" />
        </Svg>
        <Svg width="18" height="16" viewBox="0 0 18 16">
          <path d="M1 5.500h3l4-3.500v12L4 10.500H1z" fill="none" stroke="#fff" strokeWidth="1.200" />
          <circle cx="12.500" cy="10.500" r="4.700" fill="#e02b20" />
          <path d="M10.800 8.800l3.400 3.400M14.200 8.800l-3.400 3.400" stroke="#fff" strokeWidth="1.300" />
        </Svg>
        <TrayStack>
          <TrayText $size={11.6} $track={-0.2} $color="#fff">ENG</TrayText>
          <TrayText $size={11.6} $track={-0.2} $color="#fff">IN</TrayText>
        </TrayStack>
        <TrayStack>
          <TrayText $size={11.6} $track={-0.26} $color="#fff">12:39 PM</TrayText>
          <TrayText $size={11.6} $track={-0.26} $color="#fff">13-01-2025</TrayText>
        </TrayStack>
        <Svg width="18" height="16" viewBox="0 0 18 16" fill="none" stroke="#fff" strokeWidth="1.300">
          <path d="M1 1h15.500v11H12v3l-3-3H1z" />
        </Svg>
      </Tray>
    </Taskbar>
  );
}

export default function App() {
  return (
    <Screen>
      <GlobalStyle />
      <BrowserChrome />
      <MailPage />
      <AccountPopup />
      <TaskbarRow />
    </Screen>
  );
}
